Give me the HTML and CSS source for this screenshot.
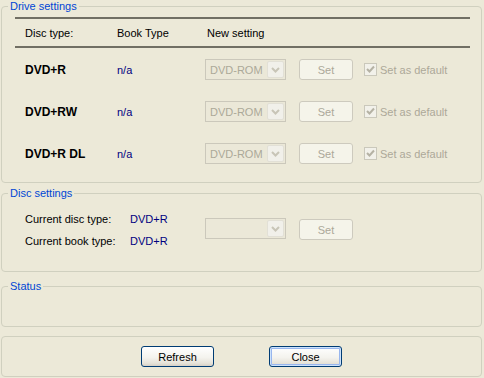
FILE: index.html
```html
<!DOCTYPE html>
<html lang="en">
<head>
    <meta charset="UTF-8">
    <title>Drive settings</title>
    <link rel="stylesheet" href="styles.css">
</head>
<body>

    <fieldset class="group drive">
        <legend>Drive settings</legend>
        <div class="head">
            <span>Disc type:</span>
            <span>Book Type</span>
            <span>New setting</span>
        </div>

        <div class="row">
            <span class="disc">DVD+R</span>
            <span class="val">n/a</span>
            <div class="combo"><span class="combo-text">DVD-ROM</span><span class="drop"><svg width="9" height="6" viewBox="0 0 9 6"><path d="M1 1 L4.5 4.5 L8 1" fill="none" stroke="#c8c5b7" stroke-width="2"/></svg></span></div>
            <button class="set" disabled>Set</button>
            <label class="chk"><span class="box"><svg width="9" height="9" viewBox="0 0 9 9"><path d="M1 4 L3.5 6.5 L8 1.5" fill="none" stroke="#b5b2a4" stroke-width="2"/></svg></span>Set as default</label>
        </div>

        <div class="row">
            <span class="disc">DVD+RW</span>
            <span class="val">n/a</span>
            <div class="combo"><span class="combo-text">DVD-ROM</span><span class="drop"><svg width="9" height="6" viewBox="0 0 9 6"><path d="M1 1 L4.5 4.5 L8 1" fill="none" stroke="#c8c5b7" stroke-width="2"/></svg></span></div>
            <button class="set" disabled>Set</button>
            <label class="chk"><span class="box"><svg width="9" height="9" viewBox="0 0 9 9"><path d="M1 4 L3.5 6.5 L8 1.5" fill="none" stroke="#b5b2a4" stroke-width="2"/></svg></span>Set as default</label>
        </div>

        <div class="row">
            <span class="disc">DVD+R DL</span>
            <span class="val">n/a</span>
            <div class="combo"><span class="combo-text">DVD-ROM</span><span class="drop"><svg width="9" height="6" viewBox="0 0 9 6"><path d="M1 1 L4.5 4.5 L8 1" fill="none" stroke="#c8c5b7" stroke-width="2"/></svg></span></div>
            <button class="set" disabled>Set</button>
            <label class="chk"><span class="box"><svg width="9" height="9" viewBox="0 0 9 9"><path d="M1 4 L3.5 6.5 L8 1.5" fill="none" stroke="#b5b2a4" stroke-width="2"/></svg></span>Set as default</label>
        </div>
    </fieldset>

    <fieldset class="group disc-settings">
        <legend>Disc settings</legend>
        <div class="info">
            <span>Current disc type:</span>
            <span class="val">DVD+R</span>
            <span>Current book type:</span>
            <span class="val">DVD+R</span>
        </div>
        <div class="combo"><span class="combo-text"></span><span class="drop"><svg width="9" height="6" viewBox="0 0 9 6"><path d="M1 1 L4.5 4.5 L8 1" fill="none" stroke="#c8c5b7" stroke-width="2"/></svg></span></div>
        <button class="set" disabled>Set</button>
    </fieldset>

    <fieldset class="group status">
        <legend>Status</legend>
    </fieldset>

    <div class="group actions">
        <button class="btn">Refresh</button>
        <button class="btn default">Close</button>
    </div>

</body>
</html>
```

FILE: styles.css
```css
/* Basic reset */
* {
    margin: 0;
    padding: 0;
    box-sizing: border-box;
}

body {
    font-family: 'Liberation Sans', Arial, sans-serif;
    font-size: 11px;
    color: #000;
    background-color: #ece9d8;
    width: 484px;
    height: 378px;
    padding: 0 2px 0 1px;
    overflow: hidden;
}

/* Group boxes */
.group {
    border: 1px solid #d0d0bf;
    border-radius: 4px;
    min-width: 0;
}

.group legend {
    margin-left: 6px;
    padding: 0 2px;
    line-height: 13px;
    color: #0046d5;
}

.drive {
    height: 183px;
}

.disc-settings {
    margin-top: 4px;
    height: 85px;
    display: flex;
    align-items: flex-start;
}

.status {
    margin-top: 8px;
    height: 47px;
}

.actions {
    margin-top: 9px;
    height: 41px;
    display: flex;
    justify-content: center;
    gap: 55px;
    padding-top: 9px;
}

/* Drive table */
.head {
    display: grid;
    grid-template-columns: 92px 90px auto;
    margin: 4px 0 0 13px;
    width: 455px;
    height: 31px;
    padding-left: 10px;
    align-items: center;
    border-top: 2px solid #716f64;
    border-bottom: 2px solid #716f64;
}

.row {
    display: grid;
    grid-template-columns: 92px 88px 94px 65px auto;
    align-items: center;
    height: 21px;
    margin: 11px 0 0 23px;
}

.row + .row {
    margin-top: 21px;
}

.disc {
    font-weight: bold;
    font-size: 12px;
}

.val {
    color: #000080;
}

/* Disabled controls */
.combo {
    display: flex;
    width: 81px;
    height: 21px;
    border: 1px solid #cbc8bb;
    background-color: #ebe8d8;
    padding: 1px;
}

.combo-text {
    flex: 1;
    padding: 2px 0 0 3px;
    color: #aca899;
    line-height: 14px;
}

.drop {
    width: 17px;
    height: 17px;
    border: 1px solid #e2e0d6;
    border-radius: 2px;
    background-color: #f1f0ea;
    display: flex;
    align-items: center;
    justify-content: center;
}

.set {
    width: 54px;
    height: 21px;
    border: 1px solid #cdcabe;
    border-radius: 3px;
    background-color: #f5f4ea;
    color: #aca899;
    font-family: inherit;
    font-size: 11px;
}

.chk {
    display: flex;
    align-items: center;
    gap: 3px;
    color: #aca899;
}

.box {
    width: 13px;
    height: 13px;
    border: 1px solid #cac8bb;
    background-color: #f2f1ea;
    display: flex;
    align-items: center;
    justify-content: center;
}

/* Disc settings */
.info {
    display: grid;
    grid-template-columns: 105px 75px;
    grid-auto-rows: 22px;
    align-items: center;
    margin: 8px 0 0 23px;
}

.disc-settings .combo {
    margin-top: 18px;
}

.disc-settings .set {
    margin: 19px 0 0 13px;
}

/* Bottom buttons */
.btn {
    width: 73px;
    height: 21px;
    border: 1px solid #003c74;
    border-radius: 3px;
    background: linear-gradient(#ffffff, #f4f3ee 55%, #e6e3d9 85%, #d6d0c5);
    font-family: inherit;
    font-size: 11px;
    color: #000;
}

.btn.default {
    box-shadow: inset 0 0 0 1px #cde2fb, inset 0 0 0 2px #98b6ee;
}
```
